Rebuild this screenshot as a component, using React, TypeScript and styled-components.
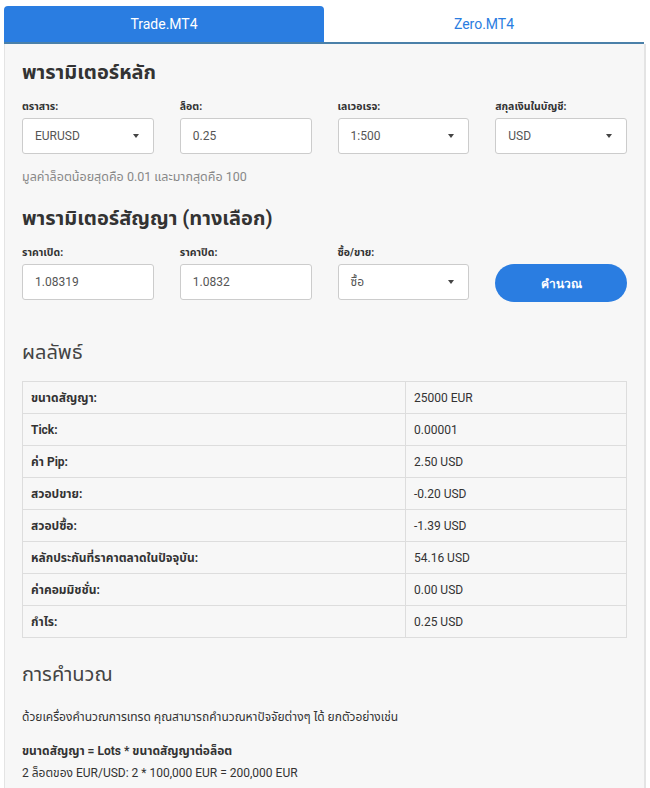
import styled, { createGlobalStyle } from "styled-components";

const GlobalStyle = createGlobalStyle`
  html, body {
    margin: 0;
    padding: 0;
    background: #ffffff;
  }

  body {
    font-family: Roboto, "Noto Sans", "Noto Sans Thai", sans-serif;
    color: #333333;
  }

  * {
    box-sizing: border-box;
  }
`;

const Wrapper = styled.div`
  padding: 6px 4px 0 4px;
  width: 650px;
`;

const Tabs = styled.div`
  display: grid;
  grid-template-columns: 320px 1fr;
  border-bottom: 2px solid #4a80a9;
  margin-right: 2px;
`;

const Tab = styled.button<{ $active?: boolean }>`
  background: ${(p) => (p.$active ? "#2a7de1" : "#ffffff")};
  border: none;
  border-radius: 4px 4px 0 0;
  color: ${(p) => (p.$active ? "#ffffff" : "#2a7de1")};
  font-family: Roboto, sans-serif;
  font-size: 14px;
  height: 36px;
  padding: 0;
`;

const Panel = styled.div`
  background: #f7f7f7;
  border-left: 1px solid #e4e4e4;
  border-right: 2px solid #e4e4e4;
  padding: 14px 17px 20px 17px;
`;

const Heading = styled.h2<{ $light?: boolean }>`
  font-size: 20px;
  font-weight: ${(p) => (p.$light ? 400 : 700)};
  color: ${(p) => (p.$light ? "#444444" : "#333333")};
  line-height: 28px;
  margin: 0;
`;

const FieldGrid = styled.div`
  display: grid;
  grid-template-columns: repeat(4, 1fr);
  column-gap: 26px;
  align-items: end;
  margin-top: 14px;
`;

const Field = styled.div`
  display: flex;
  flex-direction: column;
  gap: 4px;
`;

const Label = styled.label`
  font-size: 10.5px;
  font-weight: 700;
  color: #333333;
  line-height: 14px;
`;

const Box = styled.div`
  align-items: center;
  background: #ffffff;
  border: 1px solid #cccccc;
  border-radius: 3px;
  display: flex;
  font-size: 12px;
  color: #555555;
  height: 36px;
  justify-content: space-between;
  padding: 0 12px 0 12px;
`;

const Caret = styled.span`
  border-left: 3.5px solid transparent;
  border-right: 3.5px solid transparent;
  border-top: 4px solid #444444;
  margin-right: 2px;
`;

const Hint = styled.p`
  color: #888888;
  font-size: 12.5px;
  margin: 14px 0 17px;
`;

const CalcButton = styled.button`
  background: #2a7de1;
  border: none;
  border-radius: 19px;
  color: #ffffff;
  font-family: Roboto, sans-serif;
  font-size: 12px;
  font-weight: 700;
  height: 38px;
  margin-bottom: -2px;
`;

const Section = styled.div<{ $gap: number }>`
  margin-top: ${(p) => p.$gap}px;
`;

const Table = styled.table`
  border-collapse: collapse;
  margin-top: 15px;
  width: 100%;
`;

const Cell = styled.td<{ $head?: boolean }>`
  border: 1px solid #dddddd;
  color: #333333;
  font-size: 12px;
  font-weight: ${(p) => (p.$head ? 700 : 400)};
  height: 32px;
  padding: 0 8px;
  width: ${(p) => (p.$head ? "383px" : "auto")};
`;

const Text = styled.p<{ $bold?: boolean }>`
  font-size: 12px;
  font-weight: ${(p) => (p.$bold ? 700 : 400)};
  line-height: 22px;
  margin: 0;
`;

const Paragraph = styled(Text)`
  margin: 18px 0 12px;
`;

const results = [
  ["ขนาดสัญญา:", "25000 EUR"],
  ["Tick:", "0.00001"],
  ["ค่า Pip:", "2.50 USD"],
  ["สวอปขาย:", "-0.20 USD"],
  ["สวอปซื้อ:", "-1.39 USD"],
  ["หลักประกันที่ราคาตลาดในปัจจุบัน:", "54.16 USD"],
  ["ค่าคอมมิชชั่น:", "0.00 USD"],
  ["กำไร:", "0.25 USD"],
];

function Select({ value }: { value: string }) {
  return (
    <Box>
      {value}
      <Caret />
    </Box>
  );
}

export default function App() {
  return (
    <>
      <GlobalStyle />
      <Wrapper>
        <Tabs>
          <Tab $active>Trade.MT4</Tab>
          <Tab>Zero.MT4</Tab>
        </Tabs>
        <Panel>
          <Heading>พารามิเตอร์หลัก</Heading>
          <FieldGrid>
            <Field>
              <Label>ตราสาร:</Label>
              <Select value="EURUSD" />
            </Field>
            <Field>
              <Label>ล็อต:</Label>
              <Box>0.25</Box>
            </Field>
            <Field>
              <Label>เลเวอเรจ:</Label>
              <Select value="1:500" />
            </Field>
            <Field>
              <Label>สกุลเงินในบัญชี:</Label>
              <Select value="USD" />
            </Field>
          </FieldGrid>
          <Hint>มูลค่าล็อตน้อยสุดคือ 0.01 และมากสุดคือ 100</Hint>
          <Heading>พารามิเตอร์สัญญา (ทางเลือก)</Heading>
          <FieldGrid>
            <Field>
              <Label>ราคาเปิด:</Label>
              <Box>1.08319</Box>
            </Field>
            <Field>
              <Label>ราคาปิด:</Label>
              <Box>1.0832</Box>
            </Field>
            <Field>
              <Label>ซื้อ/ขาย:</Label>
              <Select value="ซื้อ" />
            </Field>
            <CalcButton>คำนวณ</CalcButton>
          </FieldGrid>
          <Section $gap={38}>
            <Heading $light>ผลลัพธ์</Heading>
            <Table>
              <tbody>
                {results.map(([k, v]) => (
                  <tr key={k}>
                    <Cell $head>{k}</Cell>
                    <Cell>{v}</Cell>
                  </tr>
                ))}
              </tbody>
            </Table>
          </Section>
          <Section $gap={22}>
            <Heading $light>การคำนวณ</Heading>
            <Paragraph>
              ด้วยเครื่องคำนวณการเทรด คุณสามารถคำนวณหาปัจจัยต่างๆ ได้ ยกตัวอย่างเช่น
            </Paragraph>
            <Text $bold>ขนาดสัญญา = Lots * ขนาดสัญญาต่อล็อต</Text>
            <Text>2 ล็อตของ EUR/USD: 2 * 100,000 EUR = 200,000 EUR</Text>
          </Section>
        </Panel>
      </Wrapper>
    </>
  );
}
